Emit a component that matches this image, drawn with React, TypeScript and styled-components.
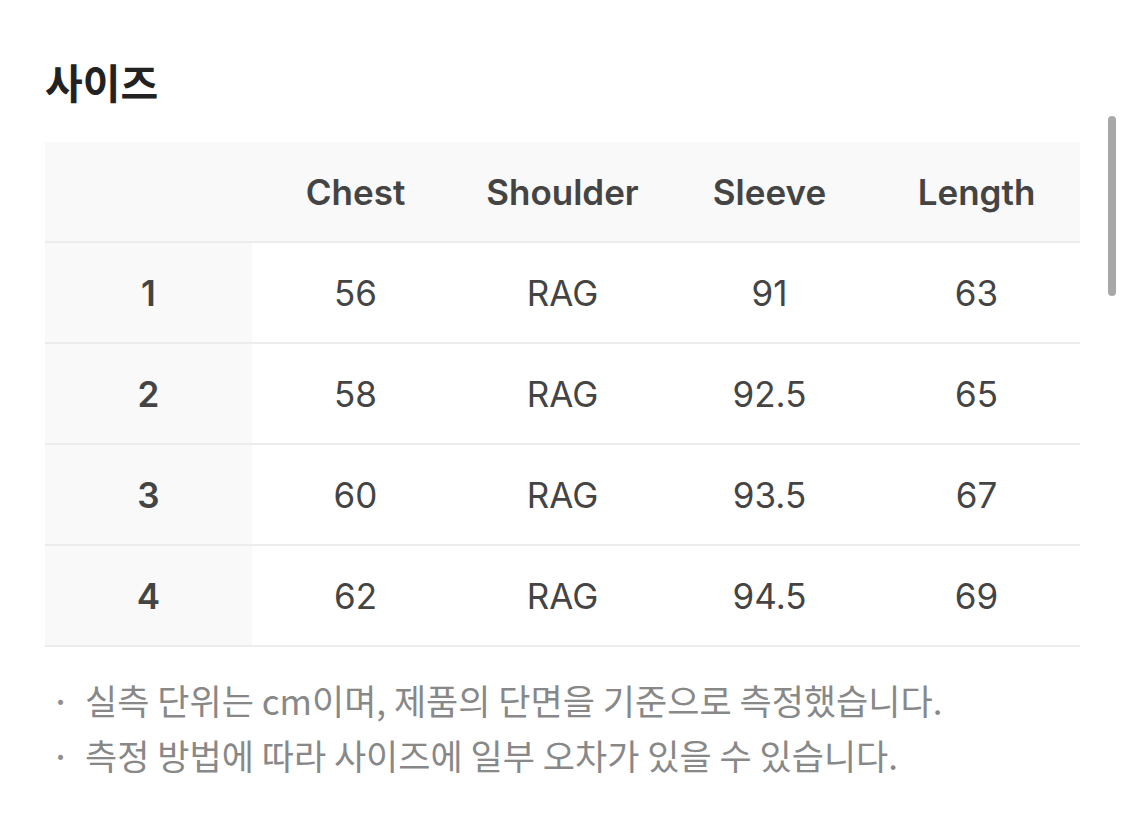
import React from "react";
import styled, { createGlobalStyle } from "styled-components";

const GlobalStyle = createGlobalStyle`
  html, body {
    margin: 0;
    padding: 0;
    background: #ffffff;
    font-family: Inter, "Noto Sans CJK KR", sans-serif;
  }
`;

const Page = styled.div`
  position: relative;
  width: 1125px;
  height: 821px;
  overflow: hidden;
  padding: 52px 45px 0 45px;
  box-sizing: border-box;
`;

const Title = styled.h2`
  margin: 0 0 32px 0;
  font-family: "Noto Sans CJK KR", sans-serif;
  font-size: 41px;
  font-weight: 600;
  line-height: 58px;
  color: #222222;
`;

const Table = styled.div`
  display: grid;
  grid-template-columns: repeat(5, 207px);
  width: 1035px;
`;

const Cell = styled.div<{ $head?: boolean; $shade?: boolean; $bold?: boolean }>`
  height: 99px;
  display: flex;
  align-items: center;
  justify-content: center;
  background: ${(p) => (p.$head || p.$shade ? "#f9f9f9" : "#ffffff")};
  border-bottom: 2px solid #ececec;
  font-family: Inter, "Noto Sans CJK KR", sans-serif;
  font-size: 35px;
  font-weight: ${(p) => (p.$head || p.$bold ? 600 : 400)};
  color: #444444;
`;

const Notes = styled.ul`
  list-style: none;
  margin: 25px 0 0 0;
  padding: 0;
`;

const Note = styled.li`
  display: flex;
  align-items: center;
  height: 55px;
  font-family: "Noto Sans CJK KR", sans-serif;
  font-size: 35px;
  color: #888888;
`;

const Bullet = styled.span`
  width: 40px;
  padding-left: 5px;
  box-sizing: border-box;
  font-size: 38px;
  color: #8f8f8f;
`;

const Scrollbar = styled.div`
  position: absolute;
  left: 1108px;
  top: 116px;
  width: 8px;
  height: 180px;
  border-radius: 4px;
  background: #a8a8a8;
`;

const headers = ["", "Chest", "Shoulder", "Sleeve", "Length"];
const rows = [
  ["1", "56", "RAG", "91", "63"],
  ["2", "58", "RAG", "92.5", "65"],
  ["3", "60", "RAG", "93.5", "67"],
  ["4", "62", "RAG", "94.5", "69"],
];

export default function App() {
  return (
    <Page>
      <GlobalStyle />
      <Title>사이즈</Title>
      <Table>
        {headers.map((h, i) => (
          <Cell key={"h" + i} $head>
            {h}
          </Cell>
        ))}
        {rows.map((row) =>
          row.map((v, i) => (
            <Cell key={row[0] + "-" + i} $shade={i === 0} $bold={i === 0}>
              {v}
            </Cell>
          ))
        )}
      </Table>
      <Notes>
        <Note>
          <Bullet>·</Bullet>실측 단위는 cm이며, 제품의 단면을 기준으로 측정했습니다.
        </Note>
        <Note>
          <Bullet>·</Bullet>측정 방법에 따라 사이즈에 일부 오차가 있을 수 있습니다.
        </Note>
      </Notes>
      <Scrollbar />
    </Page>
  );
}
